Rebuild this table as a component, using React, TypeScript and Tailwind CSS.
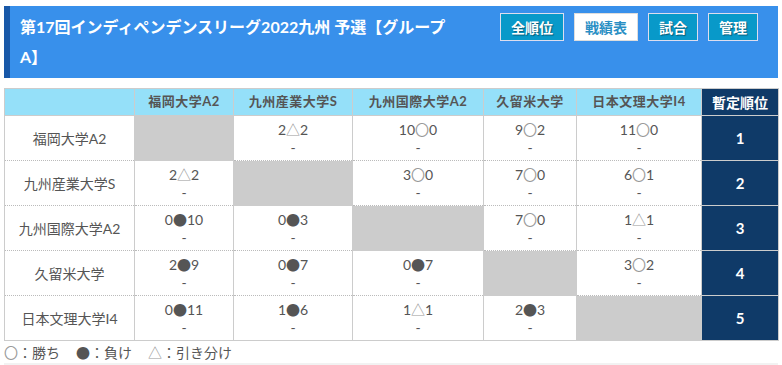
const teams = ["福岡大学A2", "九州産業大学S", "九州国際大学A2", "久留米大学", "日本文理大学I4"];

const results: (string | null)[][] = [
  [null, "2△2", "10〇0", "9〇2", "11〇0"],
  ["2△2", null, "3〇0", "7〇0", "6〇1"],
  ["0●10", "0●3", null, "7〇0", "1△1"],
  ["2●9", "0●7", "0●7", null, "3〇2"],
  ["0●11", "1●6", "1△1", "2●3", null],
];

const ranks = [1, 2, 3, 4, 5];
const widths = ["w-[130px]", "w-[99px]", "w-[119px]", "w-[131px]", "w-[93px]", "w-[125px]", "w-[77px]"];

const tabs = [
  { label: "全順位", active: false },
  { label: "戦績表", active: true },
  { label: "試合", active: false },
  { label: "管理", active: false },
];

function Score({ value }: { value: string }) {
  const m = value.match(/^(\d+)(.)(\d+)$/);
  if (!m) return <>{value}</>;
  const [, a, sym, b] = m;
  return (
    <>
      {a}
      <span
        className={
          sym === "●"
            ? "font-['Noto_Sans_CJK_JP',sans-serif] text-[#555]"
            : "font-['Noto_Sans_CJK_JP',sans-serif] text-[#999]"
        }
      >
        {sym}
      </span>
      {b}
    </>
  );
}

const cell = "border-x border-x-[#ccc] border-b border-b-[#bbb] [border-bottom-style:dotted]";

export default function App() {
  return (
    <div className="w-[782px] min-h-[365px] bg-white pt-[6px] px-[4px] font-['Lato','Noto_Sans_CJK_JP',sans-serif] text-[#555]">
      <div className="flex items-start bg-[#3890eb] border-l-[6px] border-[#1858a8] h-[72px]">
        <h1 className="w-[440px] pl-[10px] py-[6px] text-[16px] leading-[30px] font-bold text-white">
          第17回インディペンデンスリーグ2022九州 予選【グループ A】
        </h1>
        <div className="ml-auto mr-[20px] mt-[7px] flex gap-[10px]">
          {tabs.map((t) => (
            <button
              key={t.label}
              className={
                t.active
                  ? "h-[28px] px-[10px] border border-[#ddd] bg-white text-[14px] font-bold text-[#2a8fc4]"
                  : "h-[28px] px-[10px] border border-[#dde] bg-[#0899c9] text-[14px] font-bold text-white [text-shadow:1px_1px_1px_rgba(0,0,0,0.4)]"
              }
            >
              {t.label}
            </button>
          ))}
        </div>
      </div>

      <table className="mt-[10px] w-[774px] table-fixed border-collapse border border-[#ccc] text-[14px]">
        <colgroup>
          {widths.map((w, i) => (
            <col key={i} className={w} />
          ))}
        </colgroup>
        <thead>
          <tr className="h-[27px] bg-[#95e0f9]">
            <th className="border border-[#ccc]"></th>
            {teams.map((t) => (
              <th key={t} className="border border-[#ccc] font-bold text-[13px] tracking-[0.5px]">
                {t}
              </th>
            ))}
            <th className="border border-[#ccc] bg-[#0f3a68] text-white font-bold text-[14px]">暫定順位</th>
          </tr>
        </thead>
        <tbody>
          {teams.map((t, r) => (
            <tr key={t} className="h-[45px]">
              <td className={`${cell} text-center`}>{t}</td>
              {results[r].map((v, c) =>
                v === null ? (
                  <td key={c} className="bg-[#cccccc] border-x border-x-[#ccc] border-b border-b-[#ccc]"></td>
                ) : (
                  <td key={c} className={`${cell} text-center leading-[18px]`}>
                    <div>
                      <Score value={v} />
                    </div>
                    <div>-</div>
                  </td>
                )
              )}
              <td className="bg-[#0f3a68] border border-[#ccc] text-center text-white font-bold text-[15px]">
                {ranks[r]}
              </td>
            </tr>
          ))}
        </tbody>
      </table>

      <div className="h-[22px] flex items-center gap-[16px] text-[14px] text-[#555] font-['Noto_Sans_CJK_JP',sans-serif]">
        <span>
          <span className="text-[#999]">〇</span>：勝ち
        </span>
        <span>●：負け</span>
        <span>
          <span className="text-[#999]">△</span>：引き分け
        </span>
      </div>
      <div className="h-[10px] bg-[#f2f2f2]"></div>
    </div>
  );
}
